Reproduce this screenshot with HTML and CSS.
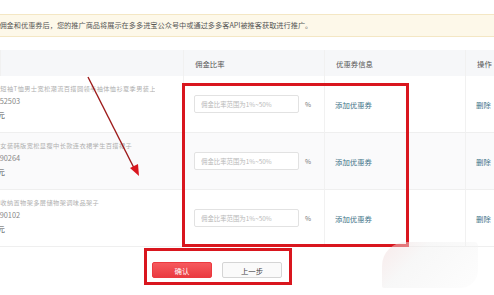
FILE: index.html
```html
<!DOCTYPE html>
<html lang="zh-CN">

<head>
  <meta charset="UTF-8">
  <meta name="viewport" content="width=device-width, initial-scale=1.0">
  <title>设置佣金和优惠券</title>
  <link rel="stylesheet" href="styles.css">
</head>

<body>
  <div class="page">

    <div class="notice">设置佣金和优惠券后，您的推广商品将展示在多多进宝公众号中或通过多多客API被推客获取进行推广。</div>

    <div class="table">
      <div class="cell head"></div>
      <div class="cell head">佣金比率</div>
      <div class="cell head">优惠券信息</div>
      <div class="cell head">操作</div>

      <div class="cell goods">
        <div class="goods-info">
          <div class="title">新款纯棉短袖T恤男士宽松潮流百搭圆领半袖体恤衫夏季男装上衣服...</div>
          <div class="id">商品ID：1352503</div>
          <div class="price">价格：19.9元</div>
        </div>
      </div>
      <div class="cell rate"><input type="text" placeholder="佣金比率范围为1%~50%"><span>%</span></div>
      <div class="cell"><a href="#">添加优惠券</a></div>
      <div class="cell"><a href="#">删除</a></div>

      <div class="cell goods alt">
        <div class="goods-info">
          <div class="title">夏季新款女装韩版宽松显瘦中长款连衣裙学生百搭裙子</div>
          <div class="id">商品ID：2690264</div>
          <div class="price">价格：29.9元</div>
        </div>
      </div>
      <div class="cell rate alt"><input type="text" placeholder="佣金比率范围为1%~50%"><span>%</span></div>
      <div class="cell alt"><a href="#">添加优惠券</a></div>
      <div class="cell alt"><a href="#">删除</a></div>

      <div class="cell goods">
        <div class="goods-info">
          <div class="title">家用厨房收纳置物架多层储物架调味品架子</div>
          <div class="id">商品ID：3390102</div>
          <div class="price">价格：39.9元</div>
        </div>
      </div>
      <div class="cell rate"><input type="text" placeholder="佣金比率范围为1%~50%"><span>%</span></div>
      <div class="cell"><a href="#">添加优惠券</a></div>
      <div class="cell"><a href="#">删除</a></div>
    </div>

    <div class="actions">
      <button class="btn primary">确认</button>
      <button class="btn">上一步</button>
    </div>

    <!-- annotations drawn over the screenshot -->
    <div class="mark mark-table"></div>
    <div class="mark mark-buttons"></div>
    <svg class="arrow" width="494" height="295" viewBox="0 0 494 295">
      <line x1="88" y1="77" x2="134" y2="168" stroke="#9e1b1b" stroke-width="1.4" />
      <polygon points="139,176 130,168 138,164" fill="#d9161e" />
    </svg>
    <div class="watermark"></div>

  </div>
</body>

</html>
```

FILE: styles.css
```css
body {
  margin: 0;
  font-family: 'Noto Sans CJK SC', 'DejaVu Sans', sans-serif;
  background-color: #fff;
}

.page {
  position: relative;
  width: 494px;
  height: 295px;
  overflow: hidden;
}

.notice {
  margin-top: 14px;
  height: 21px;
  line-height: 21px;
  border-top: 1px solid #f4e7c4;
  border-bottom: 1px solid #f4e7c4;
  background-color: #fdf8e9;
  color: #555;
  font-size: 7.2px;
  white-space: nowrap;
  text-indent: -15px;
}

.table {
  margin-top: 13px;
  display: grid;
  grid-template-columns: 183px 141px 141px 60px;
  grid-template-rows: 26px 57px 57px 57px;
}

.cell {
  display: flex;
  align-items: center;
  padding-left: 10px;
  border-bottom: 1px solid #efefef;
  border-left: 1px solid #f1f1f1;
  font-size: 7.4px;
  color: #555;
  box-sizing: border-box;
}

.cell.head {
  background-color: #f6f7f9;
  border-bottom: none;
  padding-left: 11px;
  color: #555;
}

.cell.goods {
  border-left: none;
  padding-left: 0;
}

.cell.alt {
  background-color: #fafafb;
}

.goods-info {
  margin-top: -2px;
}

.goods-info .title {
  margin-left: -26px;
  color: #b0b0b0;
  font-size: 6.2px;
  letter-spacing: 0.4px;
  line-height: 10px;
  white-space: nowrap;
  max-width: 181px;
  overflow: hidden;
}

.goods-info .id,
.goods-info .price {
  font-size: 7.4px;
  line-height: 14px;
  white-space: nowrap;
}

.goods-info .id {
  margin-left: -38px;
  color: #888;
}

.goods-info .price {
  margin-left: -39px;
  color: #555;
}

.rate input {
  width: 105px;
  height: 18px;
  box-sizing: border-box;
  border: 1px solid #e2e2e2;
  border-radius: 2px;
  padding: 0 6px;
  font-family: inherit;
  font-size: 6.4px;
  color: #555;
  background-color: #fff;
}

.rate input::placeholder {
  color: #b8b8b8;
}

.rate span {
  margin-left: 6px;
  color: #777;
  font-size: 6.6px;
}

.cell a {
  color: #3d7388;
  text-decoration: none;
}

.actions {
  display: flex;
  gap: 10px;
  margin-top: 15px;
  padding-left: 152px;
}

.btn {
  width: 60px;
  height: 16px;
  padding: 0;
  border: 1px solid #d5d5d5;
  border-radius: 2px;
  background-color: #fafafa;
  color: #444;
  font-family: inherit;
  font-size: 7.4px;
  cursor: pointer;
}

.btn.primary {
  border-color: #ec3a40;
  background: linear-gradient(#f65a5e, #ea3b41);
  color: #fff;
}

.mark {
  position: absolute;
  border: 3px solid #d9161e;
  box-sizing: border-box;
}

.mark-table {
  left: 182px;
  top: 83px;
  width: 227px;
  height: 164px;
}

.mark-buttons {
  left: 144px;
  top: 248px;
  width: 148px;
  height: 37px;
}

.arrow {
  position: absolute;
  left: 0;
  top: 0;
  pointer-events: none;
}

.watermark {
  position: absolute;
  left: 382px;
  top: 242px;
  width: 96px;
  height: 46px;
  background: linear-gradient(135deg, rgba(240, 210, 210, 0.45), rgba(240, 240, 240, 0.5) 35%, rgba(248, 248, 248, 0.3));
  border-radius: 24px 4px 18px 2px;
}
```
